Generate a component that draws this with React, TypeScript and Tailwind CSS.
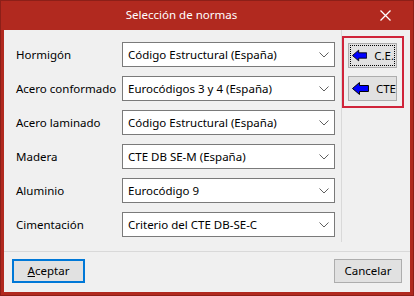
import React from "react";

const rows: [string, string][] = [
  ["Hormigón", "Código Estructural (España)"],
  ["Acero conformado", "Eurocódigos 3 y 4 (España)"],
  ["Acero laminado", "Código Estructural (España)"],
  ["Madera", "CTE DB SE-M (España)"],
  ["Aluminio", "Eurocódigo 9"],
  ["Cimentación", "Criterio del CTE DB-SE-C"],
];

function Chevron() {
  return (
    <svg width="10" height="6" viewBox="0 0 10 6" className="mr-[5px]">
      <path d="M0.5 0.5 L5 5 L9.5 0.5" fill="none" stroke="#606060" strokeWidth="1" />
    </svg>
  );
}

function Arrow() {
  return (
    <svg width="17" height="13" viewBox="0 0 17 13">
      <path d="M0.5 6.5 L7.5 0.5 L7.5 3.5 L16.5 3.5 L16.5 9.5 L7.5 9.5 L7.5 12.5 Z" fill="#0000ff" stroke="#000" strokeWidth="1" strokeLinejoin="miter" />
    </svg>
  );
}

export default function App() {
  const font = { fontFamily: '"Noto Sans", "Segoe UI", sans-serif' };
  return (
    <div className="w-[414px] h-[296px] flex flex-col bg-[#b1291f] border border-[#8c1f18]" style={font}>
      <div className="h-[29px] flex items-center text-white text-[11.5px] shrink-0">
        <div className="flex-1 text-center pb-[1px]">Selección de normas</div>
        <div className="w-[46px] mr-[5px] flex justify-center items-center">
          <svg width="11" height="11" viewBox="0 0 11 11">
            <path d="M0.5 0.5 L10.5 10.5 M10.5 0.5 L0.5 10.5" stroke="#fff" strokeWidth="1.3" />
          </svg>
        </div>
      </div>
      <div className="mx-[3px] mb-[3px] flex-1 bg-[#f0f0f0] flex flex-col">
        <div className="h-[221px] flex shrink-0">
          <div className="w-[337px] pt-[12px] pl-[12px] flex flex-col gap-[9px]">
            {rows.map(([label, value]) => (
              <div key={label} className="flex items-center h-[25px]">
                <div className="w-[106px] text-[11.5px] text-black">{label}</div>
                <div className="w-[213px] h-[25px] bg-white border border-[#7a7a7a] flex items-center justify-between text-[11.5px] text-black">
                  <span className="pl-[5px]">{value}</span>
                  <Chevron />
                </div>
              </div>
            ))}
          </div>
          <div className="w-[1px] h-[212px] bg-[#d9d9d9]" />
          <div className="pt-[6px]">
            <div className="w-[62px] h-[72px] border-2 border-[#d0243a] flex flex-col gap-[8px] pt-[5px] pl-[4px]">
              <div className="w-[49px] h-[25px] bg-[#e1e1e1] border border-[#adadad] p-[1px]">
                <div className="w-full h-full border border-dotted border-black flex items-center gap-[7px] pl-[1px] text-[11.5px] text-black">
                  <Arrow />
                  <span>C.E.</span>
                </div>
              </div>
              <div className="w-[49px] h-[25px] bg-[#e1e1e1] border border-[#adadad] flex items-center gap-[7px] pl-[3px] text-[11.5px] text-black">
                <Arrow />
                <span>CTE</span>
              </div>
            </div>
          </div>
        </div>
        <div className="h-[1px] bg-[#d9d9d9] shrink-0" />
        <div className="flex-1 flex justify-between px-[8px] pt-[7px]">
          <div className="w-[73px] h-[24px] bg-[#e1e1e1] border-2 border-[#0078d7] flex items-center justify-center text-[11.5px] text-black">
            <span><span className="underline">A</span>ceptar</span>
          </div>
          <div className="w-[68px] h-[24px] bg-[#e1e1e1] border border-[#adadad] flex items-center justify-center text-[11.5px] text-black">
            Cancelar
          </div>
        </div>
      </div>
    </div>
  );
}
